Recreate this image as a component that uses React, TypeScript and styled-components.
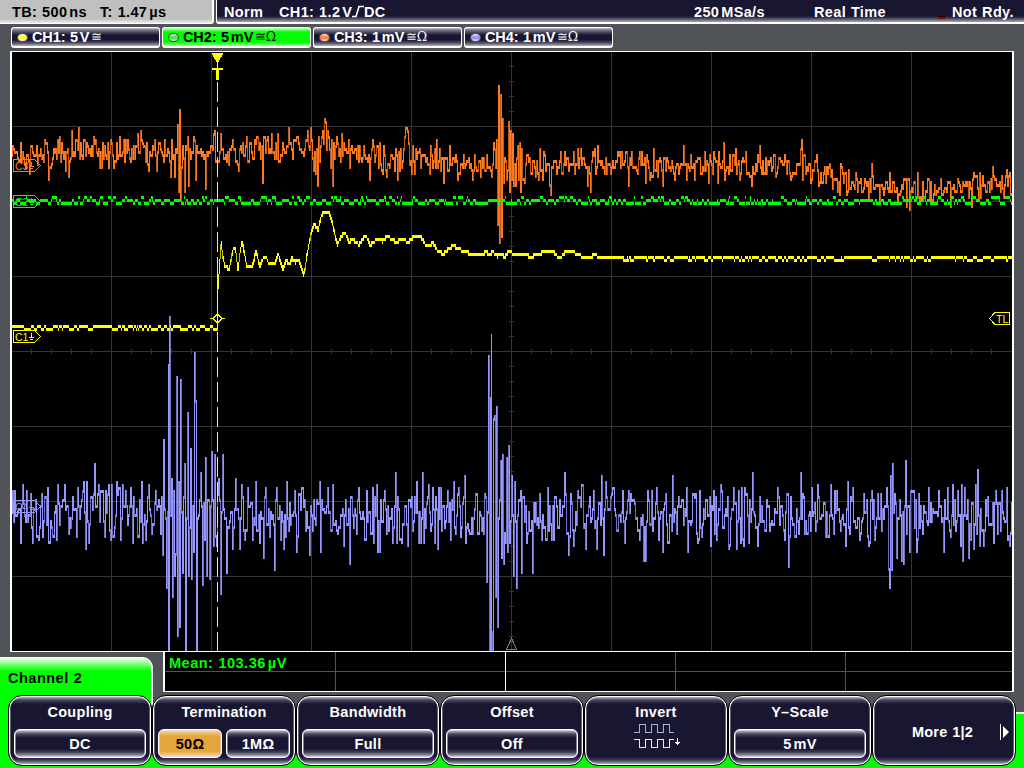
import React from 'react';
import styled, { createGlobalStyle } from 'styled-components';

type Point = [number, number];

const color = {
  frame: '#505357',
  navy: '#191632',
  green: '#00ff00',
  yellow: '#ffff00',
  orange: '#ff781e',
  blue: '#9696ff',
  grid: '#353535',
  amber: '#e6a53c',
};

const glossEdge = `linear-gradient(180deg, #d0cfd8 0, #8e8c9c 2px, #4b4860 4px, ${color.navy} 8px,
  ${color.navy} calc(100% - 8px), #3d3a54 calc(100% - 5px), #8e8c9c calc(100% - 2px), #c4c3cc 100%)`;

// ---- trace data: turning points in screen pixels ----

const ch3Peaks: Point[] = [
  [13, 149], [20, 142], [25, 166], [29, 174], [33, 154], [37, 163], [40, 149], [44, 140], [48, 178], [53, 150], [57, 139],
  [59, 136], [62, 152], [65, 171], [68, 177], [71, 130], [74, 154], [78, 127], [82, 158], [86, 143], [93, 136], [96, 152],
  [101, 168], [107, 142], [110, 140], [113, 167], [119, 136], [122, 151], [127, 141], [130, 162], [137, 133], [140, 130],
  [145, 160], [148, 171], [154, 139], [156, 171], [159, 142], [163, 160], [170, 177], [171, 140], [174, 177], [177, 125],
  [178, 190], [179, 109], [180, 201], [182, 145], [184, 192], [187, 136], [188, 184], [193, 136], [195, 178], [200, 148],
  [205, 189], [210, 145], [214, 130], [217, 160], [220, 133], [228, 163], [233, 148], [238, 170], [246, 138], [248, 160],
  [254, 140], [258, 150], [262, 181], [266, 140], [271, 133], [274, 158], [277, 133], [283, 150], [288, 127], [292, 158],
  [298, 142], [303, 154], [305, 140], [307, 130], [310, 127], [311, 140], [312, 158], [313, 171], [315, 172], [317, 184],
  [319, 160], [320, 145], [321, 136], [322, 130], [324, 118], [325, 122], [327, 130], [328, 136], [329, 150], [330, 166],
  [332, 186], [336, 136], [338, 155], [341, 133], [345, 150], [348, 139], [349, 168], [354, 150], [358, 162], [363, 145],
  [369, 180], [372, 139], [375, 154], [379, 142], [382, 174], [386, 175], [391, 154], [397, 178], [400, 149], [403, 150],
  [404, 138], [405, 127], [406, 127], [407, 130], [408, 142], [410, 160], [412, 145], [414, 174], [419, 148], [425, 160],
  [430, 145], [433, 162], [436, 139], [437, 168], [443, 181], [446, 157], [449, 145], [457, 180], [463, 154], [469, 166],
  [472, 178], [474, 154], [480, 175], [483, 157], [491, 175], [493, 142], [495, 166], [496, 139], [497, 225], [498, 85],
  [499, 243], [500, 94], [501, 237], [502, 118], [503, 181], [506, 180], [508, 121], [509, 192], [510, 130], [511, 178],
  [512, 133], [513, 184], [515, 186], [517, 145], [518, 180], [519, 142], [520, 192], [521, 150], [524, 183], [529, 157],
  [535, 175], [543, 151], [549, 186], [550, 195], [556, 172], [564, 151], [574, 174], [577, 148], [580, 148], [587, 186],
  [590, 192], [594, 148], [597, 145], [600, 164], [605, 157], [610, 173], [621, 151], [628, 184], [632, 166], [638, 157],
  [645, 183], [653, 148], [658, 160], [662, 186], [663, 157], [671, 161], [673, 174], [683, 145], [686, 180], [690, 155],
  [694, 180], [699, 157], [704, 151], [708, 183], [711, 163], [717, 183], [723, 142], [727, 166], [729, 154], [735, 148],
  [739, 180], [745, 151], [751, 186], [755, 165], [759, 145], [766, 173], [775, 176], [784, 155], [790, 180], [798, 165],
  [800, 149], [801, 139], [803, 154], [807, 170], [810, 183], [816, 154], [818, 186], [826, 166], [833, 178], [837, 192],
  [839, 195], [840, 163], [843, 183], [848, 170], [854, 188], [864, 178], [868, 198], [871, 163], [875, 184], [879, 201],
  [884, 188], [889, 172], [897, 204], [905, 178], [906, 206], [909, 210], [912, 190], [917, 172], [920, 196], [931, 204],
  [934, 184], [940, 178], [950, 207], [957, 178], [961, 190], [967, 182], [971, 207], [979, 172], [985, 192], [992, 166],
  [998, 184], [1003, 198], [1009, 172],
];

const ch4Peaks: Point[] = [
  [13, 522], [20, 541], [22, 484], [25, 520], [30, 493], [32, 543], [35, 500], [38, 540], [41, 493], [47, 487], [51, 528],
  [56, 538], [58, 503], [64, 484], [70, 526], [76, 535], [77, 487], [83, 481], [85, 547], [86, 481], [88, 541], [94, 463],
  [97, 493], [100, 490], [103, 522], [108, 484], [109, 531], [111, 484], [114, 528], [116, 481], [120, 540], [122, 484],
  [127, 524], [130, 487], [132, 541], [139, 499], [145, 538], [148, 484], [151, 534], [155, 490], [160, 532], [162, 553],
  [163, 439], [166, 586], [168, 364], [168, 650], [169, 316], [171, 478], [172, 595], [173, 490], [174, 575], [175, 553],
  [176, 376], [177, 634], [178, 481], [179, 625], [180, 379], [182, 571], [184, 463], [185, 650], [187, 412], [188, 574],
  [190, 448], [191, 577], [193, 550], [194, 352], [195, 400], [196, 650], [198, 515], [200, 472], [202, 583], [205, 457],
  [206, 574], [209, 577], [211, 451], [213, 544], [214, 454], [216, 544], [218, 478], [220, 592], [222, 454], [226, 571],
  [229, 520], [232, 547], [235, 478], [239, 547], [241, 484], [244, 538], [247, 487], [252, 540], [255, 481], [259, 543],
  [263, 556], [265, 487], [274, 568], [276, 487], [280, 540], [283, 547], [286, 481], [290, 525], [294, 490], [296, 550],
  [304, 500], [309, 553], [313, 499], [319, 481], [320, 550], [327, 487], [332, 484], [336, 530], [343, 544], [349, 562],
  [354, 510], [358, 487], [364, 540], [366, 490], [372, 487], [373, 543], [377, 550], [379, 550], [384, 490], [388, 531],
  [395, 472], [401, 541], [404, 505], [407, 544], [411, 496], [416, 481], [420, 541], [422, 472], [423, 541], [428, 484],
  [430, 530], [432, 487], [434, 543], [437, 547], [438, 487], [445, 520], [447, 490], [450, 538], [453, 481], [457, 493],
  [460, 537], [464, 475], [465, 541], [472, 534], [475, 493], [481, 531], [484, 493], [486, 580], [488, 355], [489, 650],
  [490, 397], [490, 650], [491, 334], [491, 633], [492, 650], [493, 418], [494, 415], [495, 595], [496, 406], [497, 625],
  [499, 500], [500, 460], [501, 556], [502, 454], [503, 562], [505, 543], [506, 457], [507, 550], [508, 445], [509, 543],
  [511, 475], [513, 574], [514, 481], [516, 586], [518, 500], [521, 571], [525, 505], [527, 534], [532, 571], [535, 502],
  [539, 493], [541, 538], [547, 487], [550, 525], [553, 538], [564, 472], [568, 553], [571, 502], [573, 544], [577, 490],
  [585, 547], [593, 490], [596, 547], [601, 475], [603, 553], [605, 481], [610, 498], [617, 530], [622, 490], [624, 541],
  [634, 502], [643, 559], [645, 559], [648, 500], [652, 530], [656, 487], [658, 540], [662, 550], [664, 502], [668, 541],
  [672, 475], [676, 534], [686, 487], [687, 550], [694, 498], [697, 541], [699, 490], [706, 500], [713, 490], [716, 540],
  [720, 484], [729, 544], [733, 487], [736, 547], [738, 490], [741, 487], [743, 544], [748, 541], [752, 472], [757, 544],
  [759, 497], [765, 530], [777, 487], [784, 538], [788, 565], [790, 496], [798, 534], [800, 472], [805, 522], [811, 487],
  [817, 484], [825, 535], [830, 484], [833, 534], [836, 490], [845, 544], [847, 481], [852, 487], [860, 534], [868, 544],
  [871, 490], [874, 538], [877, 493], [881, 531], [886, 487], [888, 568], [889, 586], [890, 475], [891, 568], [892, 463],
  [896, 556], [899, 499], [901, 559], [903, 562], [905, 460], [909, 550], [913, 490], [916, 550], [918, 493], [922, 532],
  [930, 502], [943, 550], [947, 487], [949, 530], [952, 484], [955, 531], [962, 559], [964, 487], [968, 556], [973, 547],
  [975, 484], [977, 469], [979, 544], [985, 500], [988, 524], [995, 490], [997, 534], [1001, 492], [1006, 487], [1009, 544],
];

const ch1Peaks: Point[] = [
  [217, 328], [218, 286], [221, 242], [223, 258], [225, 266], [229, 269], [231, 260], [233, 249], [235, 247], [238, 270],
  [240, 252], [242, 241], [244, 252], [246, 262], [247, 266], [252, 266], [254, 259], [256, 250], [259, 264], [260, 266],
  [264, 256], [266, 257], [268, 262], [275, 262], [278, 253], [281, 264], [283, 270], [286, 260], [289, 264], [292, 258],
  [295, 262], [299, 261], [301, 266], [303, 275], [305, 268], [307, 254], [311, 233], [314, 224], [318, 230], [321, 216],
  [324, 212], [329, 212], [333, 226], [337, 245], [341, 236], [345, 233], [349, 242], [352, 239], [356, 242], [359, 245],
  [363, 238], [366, 236], [370, 245], [376, 240], [382, 241], [388, 236], [391, 239], [396, 242], [402, 239], [408, 242],
  [414, 236], [420, 236], [425, 244], [430, 245], [433, 243], [437, 250], [443, 254], [450, 248], [452, 246], [459, 248],
  [463, 252], [466, 251], [470, 254], [478, 255], [487, 252], [489, 255], [493, 252], [497, 256], [500, 253], [505, 257],
  [508, 251], [512, 253], [526, 255], [531, 257], [541, 253], [546, 251], [553, 251], [557, 256], [561, 257], [565, 252],
  [569, 250], [575, 253], [583, 257], [592, 256], [594, 253], [598, 257], [620, 257],
];

const ch3Mean: Point[] = [
  [12, 156], [60, 154], [200, 152], [290, 148], [340, 152], [380, 160], [560, 166], [720, 165], [800, 167], [850, 182],
  [900, 191], [960, 189], [1012, 182],
];
const ch4Mean: Point[] = [[12, 513], [1012, 516]];

function makeRandom(seed: number) {
  let state = seed;
  return () => {
    state = (state * 1664525 + 1013904223) % 4294967296;
    return state / 4294967296;
  };
}

function valueAt(points: Point[], x: number) {
  const i = Math.max(1, points.findIndex((p) => p[0] >= x));
  const [x0, y0] = points[i - 1];
  const [x1, y1] = points[i];
  return y0 + ((y1 - y0) * (x - x0)) / (x1 - x0);
}

// a line that flips between ADC levels
function flicker(from: number, to: number, levels: number[], seed: number): Point[] {
  const random = makeRandom(seed);
  const out: Point[] = [];
  for (let x = from; x < to; ) {
    const y = levels[Math.floor(random() * levels.length)];
    const run = 1 + Math.floor(random() * 3);
    // now and then a column covers both levels
    out.push([x, y], [x + run - (random() < 0.25 ? 0.5 : 0.01), y]);
    x += run;
  }
  return out;
}

const snap = (y: number) => Math.round((y - 2.5) / 3) * 3 + 1;

type Spans = Record<number, [number, number]>;

function touch(spans: Spans, x: number, y: number) {
  const s = spans[x];
  const q = snap(y);
  spans[x] = s ? [Math.min(s[0], q), Math.max(s[1], q)] : [q, q];
}

function drawBars(spans: Spans, dimFrom: number) {
  let bright = '';
  let dim = '';
  Object.keys(spans).forEach((key) => {
    const x = Number(key);
    const [top, bottom] = spans[x];
    const bar = `M${x} ${top}h1v${bottom - top + 3}h-1z`;
    if (bottom - top > dimFrom && (x * 7) % 11 < 4) dim += bar;
    else bright += bar;
  });
  return { bright, dim };
}

// connected line: one bar per screen column
function lineBars(points: Point[]) {
  const spans: Spans = {};
  for (let i = 0; i < points.length - 1; i++) {
    const [x0, y0] = points[i];
    const [x1, y1] = points[i + 1];
    const steps = Math.max(1, Math.ceil(Math.abs(x1 - x0) * 4));
    for (let s = 0; s <= steps; s++) {
      touch(spans, Math.floor(x0 + ((x1 - x0) * s) / steps), y0 + ((y1 - y0) * s) / steps);
    }
  }
  return drawBars(spans, 5);
}

// noisy signal: samples scatter round the mean, each column joins its sample to the one before
function noiseBars(peaks: Point[], mean: Point[], amount: number, seed: number) {
  const random = makeRandom(seed);
  const spans: Spans = {};
  const known: Record<number, number[]> = {};
  peaks.forEach(([x, y]) => {
    known[x] = [...(known[x] || []), y];
  });
  let last = valueAt(mean, 13);
  let hold = 0;
  for (let x = 12; x < 1012; x++) {
    touch(spans, x, last);
    if (known[x]) {
      known[x].forEach((y) => touch(spans, x, y));
      last = known[x][known[x].length - 1];
      hold = 0;
    } else if (hold > 0) {
      hold--;
    } else {
      last = valueAt(mean, x) + (random() + random() - 1) * amount;
      hold = random() < 0.3 ? 1 : 0;
      touch(spans, x, last);
    }
  }
  return drawBars(spans, 8);
}

const ch1 = lineBars([
  ...flicker(12, 216, [326.5, 329.5], 11),
  ...ch1Peaks,
  ...flicker(621, 1012, [257.5, 257.5, 260.5], 5),
]);
const ch2 = lineBars(flicker(12, 1012, [200.5, 200.5, 203.5, 203.5, 200.5, 203.5, 198], 77));
const ch3 = noiseBars(ch3Peaks, ch3Mean, 16, 31);
const ch4 = noiseBars(ch4Peaks, ch4Mean, 33, 9);

interface TraceProps {
  bars: { bright: string; dim: string };
  stroke: string;
}

const Trace = ({ bars, stroke }: TraceProps) => (
  <g fill={stroke}>
    <path d={bars.bright} />
    <path d={bars.dim} opacity={0.74} />
  </g>
);

interface MarkerProps {
  y: number;
  stroke: string;
  label: string;
}

const ChannelMarker = ({ y, stroke, label }: MarkerProps) => (
  <g stroke={stroke} fill="none">
    <path d={`M13.5 ${y - 6}H34.5L40.5 ${y}L34.5 ${y + 6}H13.5Z`} />
    <MarkerText x={15} y={y + 4} fill={stroke}>{label}</MarkerText>
    <path d={`M31.5 ${y - 4}V${y + 1}M29 ${y + 1}H34M30 ${y + 3}H33`} />
  </g>
);

const range = (from: number, to: number, step: number) => {
  const out: number[] = [];
  for (let v = from; v <= to; v += step) out.push(v);
  return out;
};

const Graticule = () => (
  <g stroke={color.grid} fill="none">
    <path d={range(111, 911, 100).map((x) => `M${x + 0.5} 52V651`).join('')} />
    <path d={range(126, 576, 75).map((y) => `M12 ${y + 0.5}H1012`).join('')} />
    <path d={range(66, 636, 15).map((y) => `M509 ${y + 0.5}H514`).join('')} />
    <path d={range(31, 991, 20).map((x) => `M${x + 0.5} 349V354`).join('')} />
  </g>
);

const Scope = () => (
  <ScopeSvg viewBox="12 52 1000 599" shapeRendering="crispEdges">
    <Graticule />
    <path d="M511.5 638L506.5 649.5H516.5Z" fill="none" stroke="#808080" />
    <Trace bars={ch4} stroke={color.blue} />
    <Trace bars={ch3} stroke={color.orange} />
    <Trace bars={ch2} stroke={color.green} />
    <Trace bars={ch1} stroke={color.yellow} />
    <ChannelMarker y={165.5} stroke={color.orange} label="C3" />
    <ChannelMarker y={201.5} stroke={color.green} label="C2" />
    <ChannelMarker y={336.5} stroke={color.yellow} label="C1" />
    <ChannelMarker y={506.5} stroke={color.blue} label="C4" />
    <path d="M217.5 82V651" stroke={color.yellow} strokeDasharray="20 5" />
    <path d="M217.5 257V330" stroke={color.yellow} />
    <path d="M212 53H223V54L218 63H217L212 54Z" fill={color.yellow} />
    <path d="M212 68H223V70H219V80H216V70H212ZM217 62H218V68H217Z" fill={color.yellow} />
    <path d="M210 318.5H213L217.5 314L222 318.5H225M213 318.5L217.5 323L222 318.5" fill="none" stroke={color.yellow} />
    <path d="M1009.5 312.5H995L989.5 318.5L995 324.5H1009.5Z" fill="#000" stroke={color.yellow} />
    <MarkerText x={996} y={322.5} fill={color.yellow}>TL</MarkerText>
  </ScopeSvg>
);

const InvertIcon = () => (
  <InvertSvg width="48" height="26" viewBox="0 0 48 26" shapeRendering="crispEdges" fill="none">
    <path d="M0 9.5H5.5V1.5H11.5V9.5H17.5V1.5H23.5V9.5H29.5V1.5H35.5V9.5H40" stroke="#a0b4dc" />
    <path d="M0 16.5H5.5V24.5H11.5V16.5H17.5V24.5H23.5V16.5H29.5V24.5H35.5V16.5H40" stroke="#b4ffff" />
    <path d="M43.5 15V22M41 19.5H46M42 20.5H45" stroke="#fff" />
  </InvertSvg>
);

interface ChannelProps {
  name: string;
  value: string;
  unit: string;
  led: string;
  ohm?: boolean;
  active?: boolean;
}

const ChannelChip = ({ name, value, unit, led, ohm, active }: ChannelProps) => (
  <Chip $active={active}>
    <Led $color={led} $active={active} />
    <ChipName>{name}:</ChipName>
    <ChipText>{value}</ChipText>
    <ChipText>{unit}</ChipText>
    <ChipSymbol>≅{ohm && 'Ω'}</ChipSymbol>
  </Chip>
);

const App: React.FC = () => {
  return (
    <>
      <GlobalStyle />
      <Screen>
        <StatusBar>
          <TimeBase>
            <StatusText $width={88}>TB: 500<Thin />ns</StatusText>
            <StatusText>T: 1.47<Thin />µs</StatusText>
          </TimeBase>
          <TriggerBar>
            <StatusText $width={55}>Norm</StatusText>
            <StatusText $width={73}>CH1: 1.2<Thin />V</StatusText>
            <EdgeIcon width="12" height="13" viewBox="0 0 12 13" fill="none">
              <path d="M0 11.5H4L7 1.5H12" stroke="#fff" strokeWidth="1.6" />
            </EdgeIcon>
            <StatusText $width={330}>DC</StatusText>
            <StatusText $width={120}>250<Thin />MSa/s</StatusText>
            <StatusText $width={124}>Real Time</StatusText>
            <BusyMark />
            <StatusText>Not Rdy.</StatusText>
          </TriggerBar>
        </StatusBar>
        <ChannelBar>
          <ChannelChip name="CH1" value="5" unit="V" led="#ffff3c" />
          <ChannelChip name="CH2" value="5" unit="mV" led="#50e650" ohm active />
          <ChannelChip name="CH3" value="1" unit="mV" led="#ff823c" ohm />
          <ChannelChip name="CH4" value="1" unit="mV" led="#9696ff" ohm />
        </ChannelBar>
        <Plot>
          <Scope />
        </Plot>
        <ResultRow>
          <MenuTab>Channel 2</MenuTab>
          <Results>
            <Cell $first>Mean: 103.36<Thin />µV</Cell>
            <Cell />
            <Cell $strong />
            <Cell />
            <Cell />
          </Results>
        </ResultRow>
        <Menu>
          <MenuItem>
            <MenuTitle>Coupling</MenuTitle>
            <Values><Value>DC</Value></Values>
          </MenuItem>
          <MenuItem>
            <MenuTitle>Termination</MenuTitle>
            <Values>
              <Value $selected>50Ω</Value>
              <Value>1MΩ</Value>
            </Values>
          </MenuItem>
          <MenuItem>
            <MenuTitle>Bandwidth</MenuTitle>
            <Values><Value>Full</Value></Values>
          </MenuItem>
          <MenuItem>
            <MenuTitle>Offset</MenuTitle>
            <Values><Value>Off</Value></Values>
          </MenuItem>
          <MenuItem>
            <MenuTitle>Invert</MenuTitle>
            <InvertIcon />
          </MenuItem>
          <MenuItem>
            <MenuTitle>Y–Scale</MenuTitle>
            <Values><Value>5<Thin />mV</Value></Values>
          </MenuItem>
          <MoreItem>
            <MoreText>More 1|2</MoreText>
            <MoreArrow width="9" height="16" viewBox="0 0 9 16">
              <path d="M0 0H1V16H0ZM3 2L9 8L3 14Z" fill="#fff" />
            </MoreArrow>
          </MoreItem>
        </Menu>
      </Screen>
    </>
  );
};

export default App;

const GlobalStyle = createGlobalStyle`
  body {
    margin: 0;
    overflow: hidden;
    background: ${color.frame};
  }
  * {
    box-sizing: border-box;
  }
`;

const Screen = styled.div`
  display: flex;
  flex-direction: column;
  width: 1024px;
  height: 768px;
  overflow: hidden;
  background: ${color.frame};
  color: #fff;
  font: bold 14.5px/16px 'Liberation Sans', Arial, sans-serif;
  letter-spacing: 0.5px;
  word-spacing: 0.5px;
  white-space: nowrap;
`;

const StatusBar = styled.header`
  display: flex;
  gap: 2px;
  height: 24px;
`;

const TimeBase = styled.div`
  display: flex;
  width: 214px;
  padding: 4px 0 0 12px;
  border-right: 2px solid #fff;
  border-bottom: 1px solid #fff;
  border-bottom-right-radius: 3px;
  background: linear-gradient(180deg, #c0c0c0 19px, #eee 23px);
  color: #000;
  letter-spacing: 0.35px;
`;

const TriggerBar = styled.div`
  display: flex;
  flex: 1;
  padding: 4px 0 0 7px;
  border-left: 1px solid #fff;
  border-bottom: 2px solid #fff;
  border-bottom-left-radius: 3px;
  background: linear-gradient(180deg, ${color.navy} 16px, #3d3a54 18px, #a9a8b4 22px);
  letter-spacing: 0.35px;
`;

const StatusText = styled.span<{ $width?: number }>`
  width: ${({ $width }) => ($width ? `${$width}px` : 'auto')};
  flex-shrink: 0;
`;

const Thin = styled.span`
  display: inline-block;
  width: 2px;
`;

const EdgeIcon = styled.svg`
  margin: 1px 0 0;
  flex-shrink: 0;
`;

const BusyMark = styled.span`
  width: 7px;
  height: 3px;
  margin: 12px 7px 0 0;
  border-top: 1px solid #000;
  background: #a00000;
`;

const ChannelBar = styled.div`
  display: flex;
  gap: 2px;
  height: 27px;
  padding: 3px 0 0 11px;
`;

const Chip = styled.div<{ $active?: boolean }>`
  display: flex;
  align-items: center;
  width: 149px;
  height: 21px;
  padding: 0 0 0 5px;
  border: 1px solid #fff;
  border-bottom-width: 2px;
  border-radius: 3px;
  background: ${({ $active }) =>
    $active
      ? `linear-gradient(180deg, #c8ffc8 0, ${color.green} 4px, ${color.green} 14px, #a0ffa0 100%)`
      : `linear-gradient(180deg, #c8c7d0 0, #77758a 2px, ${color.navy} 7px, ${color.navy} 12px, #55526a 15px, #b4b3bf 100%)`};
  color: ${({ $active }) => ($active ? '#000' : '#fff')};
`;

const Led = styled.span<{ $color: string; $active?: boolean }>`
  width: 11px;
  height: 9px;
  margin-right: 4px;
  border: 1px solid ${({ $active }) => ($active ? '#2d502d' : '#555')};
  border-radius: 50%;
  background: linear-gradient(180deg, #eee 0, ${({ $color }) => $color} 40%, ${({ $color }) => $color} 65%, #eee 100%);
`;

const ChipName = styled.span`
  width: 38px;
  letter-spacing: -0.1px;
`;

const ChipText = styled.span`
  margin-right: 1.5px;
  letter-spacing: 0.2px;
`;

const ChipSymbol = styled.span`
  font: 12.5px/16px 'DejaVu Serif', serif;
  letter-spacing: -0.5px;
`;

const Plot = styled.main`
  width: 1004px;
  height: 601px;
  margin-left: 10px;
  border: 2px solid #fff;
  border-top-width: 1px;
  border-bottom-width: 1px;
  background: #000;
`;

const ScopeSvg = styled.svg`
  display: block;
  width: 1000px;
  height: 599px;
`;

const MarkerText = styled.text`
  font: 10.5px 'Liberation Sans', Arial, sans-serif;
  letter-spacing: 0;
  stroke: none;
`;

const ResultRow = styled.div`
  display: flex;
  justify-content: space-between;
  height: 43px;
  padding-right: 10px;
`;

const MenuTab = styled.div`
  width: 153px;
  margin-top: 5px;
  padding: 13px 0 0 8px;
  border-right: 2px solid #fff;
  border-top-right-radius: 11px;
  background: linear-gradient(180deg, #fff 0, #c8ffc8 3px, ${color.green} 14px);
  color: #000;
`;

const Results = styled.div`
  display: flex;
  width: 851px;
  height: 40px;
  overflow: hidden;
  border: 2px solid #fff;
  border-top: 0;
  border-bottom-width: 1px;
  background: linear-gradient(${color.frame}, ${color.frame}) 0 19px / 100% 1px no-repeat #000;
`;

const Cell = styled.div<{ $first?: boolean; $strong?: boolean }>`
  flex: none;
  width: 170px;
  padding: 3px 0 0 4px;
  border-left: ${({ $first, $strong }) => ($first ? 'none' : `1px solid ${$strong ? '#fff' : color.frame}`)};
  color: ${color.green};
`;

const Menu = styled.nav`
  display: flex;
  height: 73px;
  padding-left: 8px;
  background:
    linear-gradient(#fff, #fff) 151px 0 / 2px 10px no-repeat,
    linear-gradient(${color.green}, ${color.green}) 0 0 / 151px 100% no-repeat,
    linear-gradient(#fff 2px, ${color.green} 2px) 100% 17px / 9px 56px no-repeat,
    linear-gradient(${color.green}, ${color.green}) 0 60px / 100% 13px no-repeat,
    ${color.frame};
`;

const MenuItem = styled.div`
  display: flex;
  flex-direction: column;
  align-items: center;
  width: 144px;
  height: 71px;
  padding: 8px 4px 0;
  border: 1px solid #000;
  border-radius: 14px;
  background: ${glossEdge};
  box-shadow: inset 0 0 0 1px #fff, inset 0 0 0 1.5px #aaa;
`;

const MenuTitle = styled.div`
  letter-spacing: 0.3px;
`;

const Values = styled.div`
  display: flex;
  gap: 4px;
  width: 132px;
  margin-top: 9px;
`;

const Value = styled.button<{ $selected?: boolean }>`
  flex: 1;
  height: 29px;
  padding: 0;
  border: 1px solid #fff;
  border-radius: 6px;
  box-shadow: inset 0 0 0 0.5px #ddd;
  background: ${({ $selected }) =>
    $selected
      ? `linear-gradient(180deg, #f5dcb4 0, ${color.amber} 6px, ${color.amber} 21px, #f5dcb4 100%)`
      : glossEdge};
  color: ${({ $selected }) => ($selected ? '#000' : '#fff')};
  font: inherit;
  letter-spacing: 0.3px;
`;

const InvertSvg = styled.svg`
  margin: 3px 0 0 4px;
`;

const MoreItem = styled(MenuItem)`
  flex-direction: row;
  padding: 2px 4px 0 39px;
`;

const MoreText = styled.span`
  flex: 1;
  letter-spacing: 0.2px;
`;

const MoreArrow = styled.svg`
  margin-right: 2px;
`;
